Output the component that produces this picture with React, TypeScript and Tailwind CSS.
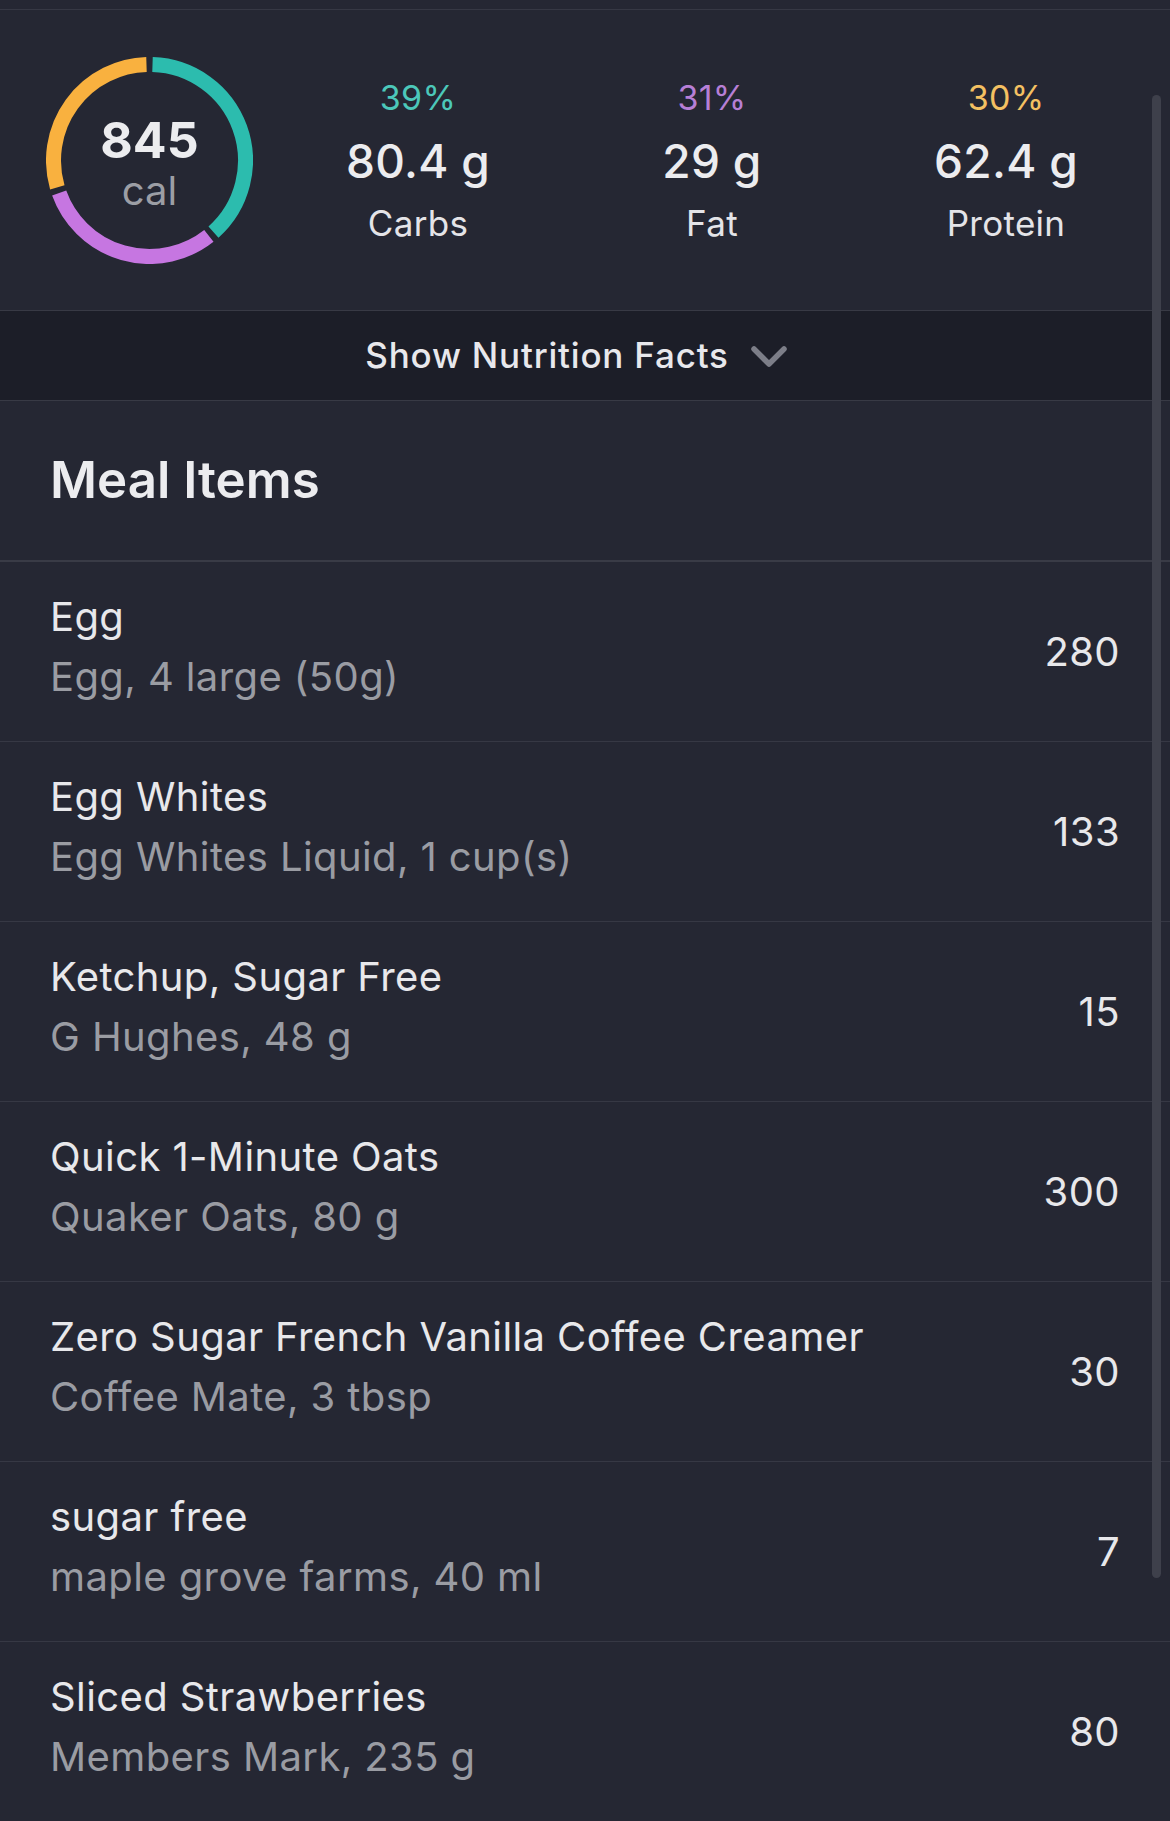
interface MealItem {
  name: string;
  detail: string;
  calories: number;
}

const items: MealItem[] = [
  { name: 'Egg', detail: 'Egg, 4 large (50g)', calories: 280 },
  { name: 'Egg Whites', detail: 'Egg Whites Liquid, 1 cup(s)', calories: 133 },
  { name: 'Ketchup, Sugar Free', detail: 'G Hughes, 48 g', calories: 15 },
  { name: 'Quick 1-Minute Oats', detail: 'Quaker Oats, 80 g', calories: 300 },
  { name: 'Zero Sugar French Vanilla Coffee Creamer', detail: 'Coffee Mate, 3 tbsp', calories: 30 },
  { name: 'sugar free', detail: 'maple grove farms, 40 ml', calories: 7 },
  { name: 'Sliced Strawberries', detail: 'Members Mark, 235 g', calories: 80 },
];

const macros = [
  { pct: '39%', value: '80.4 g', label: 'Carbs', color: 'text-[#4cc8ba]' },
  { pct: '31%', value: '29 g', label: 'Fat', color: 'text-[#b77fd6]' },
  { pct: '30%', value: '62.4 g', label: 'Protein', color: 'text-[#f4c062]' },
];

// angles in degrees, clockwise from 12 o'clock
const arcPath = (cx: number, cy: number, r: number, start: number, end: number) => {
  const toXY = (deg: number) => {
    const rad = ((deg - 90) * Math.PI) / 180;
    return [cx + r * Math.cos(rad), cy + r * Math.sin(rad)];
  };
  const [x1, y1] = toXY(start);
  const [x2, y2] = toXY(end);
  const large = end - start > 180 ? 1 : 0;
  return `M ${x1} ${y1} A ${r} ${r} 0 ${large} 1 ${x2} ${y2}`;
};

const CalorieRing = () => {
  const size = 207;
  const c = size / 2;
  const r = 96;
  const gap = 1.8;
  const segments = [
    { start: 0, end: 140, color: '#2cbcae' },
    { start: 140, end: 252, color: '#c676e1' },
    { start: 252, end: 360, color: '#f9b13f' },
  ];

  return (
    <div className="relative w-[207px] h-[207px]">
      <svg width={size} height={size} viewBox={`0 0 ${size} ${size}`}>
        {segments.map((s, i) => (
          <path
            key={i}
            d={arcPath(c, c, r, s.start + gap, s.end - gap)}
            fill="none"
            stroke={s.color}
            strokeWidth={15}
          />
        ))}
      </svg>
      <div className="absolute inset-0 flex flex-col items-center justify-center pt-[5px]">
        <div className="text-[50px] leading-[56px] font-bold text-[#ececef]">845</div>
        <div className="text-[40px] leading-[46px] text-[#9c9ea5]">cal</div>
      </div>
    </div>
  );
};

const App = () => {
  return (
    <div className="relative w-[1170px] h-[1821px] overflow-hidden bg-[#252733] [font-family:Inter,sans-serif]">
      <div className="h-[9px]" />

      {/* calorie + macro summary */}
      <div className="flex items-center h-[301px] border-t border-[#363844]">
        <div className="w-[271px] pl-[46px]">
          <CalorieRing />
        </div>
        <div className="grid grid-cols-3 w-[882px]">
          {macros.map((m) => (
            <div key={m.label} className="flex flex-col items-center">
              <div className={`text-[34px] leading-[40px] tracking-[0.3px] ${m.color}`}>{m.pct}</div>
              <div className="text-[46px] leading-[86px] font-medium text-[#ececef] tracking-[0.3px]">{m.value}</div>
              <div className="text-[35px] leading-[38px] text-[#e4e4e8] tracking-[0.3px]">{m.label}</div>
            </div>
          ))}
        </div>
      </div>

      {/* nutrition facts toggle */}
      <div className="flex items-center justify-center gap-[22px] h-[91px] pr-[18px] bg-[#1c1e28] border-y border-[#383a45]">
        <span className="text-[35px] font-medium text-[#e8e8ec] tracking-[0.8px]">Show Nutrition Facts</span>
        <svg width="36" height="22" viewBox="0 0 36 22" className="mt-[2px]">
          <polyline
            points="3,3 18,18 33,3"
            fill="none"
            stroke="#7c7e88"
            strokeWidth={5.5}
            strokeLinecap="round"
            strokeLinejoin="round"
          />
        </svg>
      </div>

      {/* meal items */}
      <div className="flex items-center h-[161px] px-[50px] border-b-2 border-[#393b46]">
        <h2 className="text-[51px] font-semibold text-[#ececef]">Meal Items</h2>
      </div>

      <div>
        {items.map((item) => (
          <div
            key={item.name}
            className="flex items-center justify-between h-[180px] pl-[50px] pr-[50px] border-b border-[#363844]"
          >
            <div className="flex flex-col pb-[9px]">
              <div className="text-[40px] leading-[60px] text-[#e8e8eb] tracking-[0.4px]">{item.name}</div>
              <div className="text-[40px] leading-[60px] text-[#9a9ca3] tracking-[0.4px]">{item.detail}</div>
            </div>
            <div className="text-[40px] text-[#e8e8eb] tracking-[0.4px]">{item.calories}</div>
          </div>
        ))}
      </div>

      {/* scroll indicator */}
      <div className="absolute left-[1152px] top-[95px] w-[9px] h-[1483px] rounded-full bg-[#3e404b]" />
    </div>
  );
};

export default App;
